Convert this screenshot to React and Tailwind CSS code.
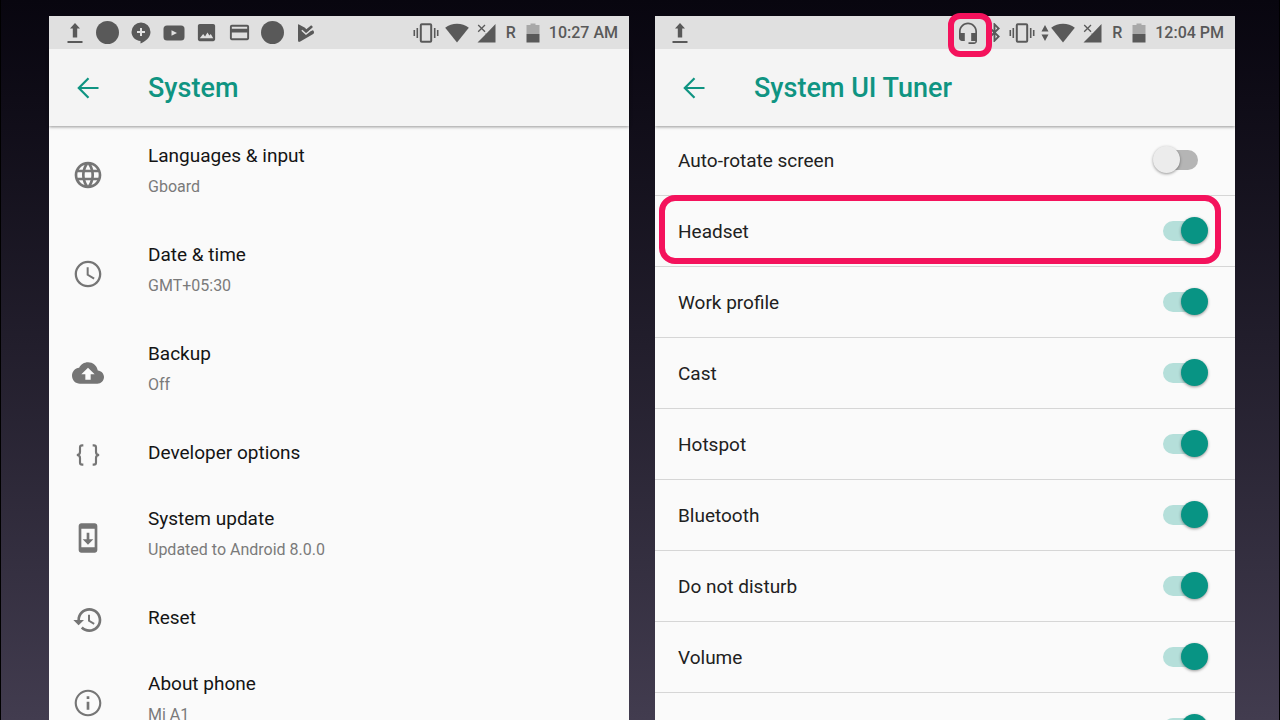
import { useState } from "react";

const systemItems = [
  { icon: "globe", title: "Languages & input", summary: "Gboard" },
  { icon: "clock", title: "Date & time", summary: "GMT+05:30" },
  { icon: "cloud", title: "Backup", summary: "Off" },
  { icon: "braces", title: "Developer options" },
  { icon: "update", title: "System update", summary: "Updated to Android 8.0.0" },
  { icon: "restore", title: "Reset" },
  { icon: "info", title: "About phone", summary: "Mi A1" },
];

const initialToggles = [
  { id: "rotate", label: "Auto-rotate screen", on: false },
  { id: "headset", label: "Headset", on: true, highlighted: true },
  { id: "work", label: "Work profile", on: true },
  { id: "cast", label: "Cast", on: true },
  { id: "hotspot", label: "Hotspot", on: true },
  { id: "bluetooth", label: "Bluetooth", on: true },
  { id: "dnd", label: "Do not disturb", on: true },
  { id: "volume", label: "Volume", on: true },
  { id: "wifi", label: "Wi-Fi", on: true },
];

// 24x24 material paths
const paths = {
  globe:
    "M11.99 2C6.47 2 2 6.48 2 12s4.47 10 9.99 10C17.52 22 22 17.52 22 12S17.52 2 11.99 2zm6.93 6h-2.95c-.32-1.25-.78-2.45-1.38-3.56 1.84.63 3.37 1.91 4.33 3.56zM12 4.04c.83 1.2 1.48 2.53 1.91 3.96h-3.82c.43-1.43 1.08-2.76 1.91-3.96zM4.26 14C4.1 13.36 4 12.69 4 12s.1-1.36.26-2h3.38c-.08.66-.14 1.32-.14 2s.06 1.34.14 2H4.26zm.82 2h2.95c.32 1.25.78 2.45 1.38 3.56-1.84-.63-3.37-1.9-4.33-3.56zm2.95-8H5.08c.96-1.66 2.49-2.93 4.33-3.56C8.81 5.55 8.35 6.75 8.03 8zM12 19.96c-.83-1.2-1.48-2.53-1.91-3.96h3.82c-.43 1.43-1.08 2.76-1.91 3.96zM14.34 14H9.66c-.09-.66-.16-1.32-.16-2s.07-1.35.16-2h4.68c.09.65.16 1.32.16 2s-.07 1.34-.16 2zm.25 5.56c.6-1.11 1.06-2.31 1.38-3.56h2.95c-.96 1.65-2.49 2.93-4.33 3.56zM16.36 14c.08-.66.14-1.32.14-2s-.06-1.34-.14-2h3.38c.16.64.26 1.31.26 2s-.1 1.36-.26 2h-3.38z",
  clock:
    "M11.99 2C6.47 2 2 6.48 2 12s4.47 10 9.99 10C17.52 22 22 17.52 22 12S17.52 2 11.99 2zM12 20.3c-4.58 0-8.3-3.72-8.3-8.3s3.72-8.3 8.3-8.3 8.3 3.72 8.3 8.3-3.72 8.3-8.3 8.3zM12.500 7H11v6l5.200 3.100.8-1.300-4.500-2.600z",
  cloud:
    "M19.35 10.04C18.67 6.59 15.64 4 12 4 9.11 4 6.6 5.64 5.35 8.04 2.34 8.36 0 10.91 0 14c0 3.31 2.69 6 6 6h13c2.76 0 5-2.24 5-5 0-2.64-2.05-4.78-4.65-4.96zM14 13v4h-4v-4H7l5-5 5 5h-3z",
  update:
    "M17 1.01L7 1c-1.1 0-2 .9-2 2v18c0 1.1.9 2 2 2h10c1.1 0 2-.9 2-2V3c0-1.1-.9-1.99-2-1.99zM17 19H7V5h10v14zm-1-6h-3V8h-2v5H8l4 4 4-4z",
  restore:
    "M13 3c-4.97 0-9 4.03-9 9H1l3.89 3.89.07.14L9 12H6c0-3.87 3.13-7 7-7s7 3.13 7 7-3.13 7-7 7c-1.93 0-3.68-.79-4.94-2.06l-1.42 1.42C8.27 19.99 10.51 21 13 21c4.97 0 9-4.03 9-9s-4.03-9-9-9zm-1 5v5l4.28 2.54.72-1.21-3.5-2.08V8H12z",
  info: "M11 7h2v2h-2zm0 4h2v6h-2zm1-9C6.48 2 2 6.48 2 12s4.48 10 10 10 10-4.48 10-10S17.52 2 12 2zm0 18.4c-4.6 0-8.4-3.8-8.4-8.4S7.4 3.6 12 3.6s8.4 3.8 8.4 8.4-3.8 8.4-8.4 8.4z",
  headset:
    "M12 1.500c-4.970 0-9 4.030-9 9v6.500c0 1.660 1.340 3 3 3h2.800v-8H4.700v-1.500c0-4 3.300-7.300 7.300-7.300s7.300 3.300 7.300 7.300V12h-4.100v8h4.100v1.200H12.500v1.700h5.500c1.660 0 3-1.340 3-3v-9.400c0-4.970-4.030-9-9-9z",
  bluetooth:
    "M17.71 7.71L12 2h-1v7.59L6.41 5 5 6.41 10.59 12 5 17.59 6.41 19 11 14.41V22h1l5.71-5.71-4.3-4.29 4.3-4.29zM13 5.83l1.88 1.88L13 9.59V5.83zm1.88 10.46L13 18.17v-3.76l1.88 1.88z",
  image:
    "M21 19V5c0-1.1-.9-2-2-2H5c-1.1 0-2 .9-2 2v14c0 1.1.9 2 2 2h14c1.1 0 2-.9 2-2zM5 18l3.500-4.500 2 2.600 2.500-4.100 2 3 1.500-1.500L19 18z",
  card: "M20 4H4c-1.11 0-1.99.89-1.99 2L2 18c0 1.11.89 2 2 2h16c1.11 0 2-.89 2-2V6c0-1.11-.89-2-2-2zm0 14H4v-6h16v6zm0-10H4V6h16v2z",
};

const PathIcon = ({ name, className }) => (
  <svg viewBox="0 0 24 24" fill="currentColor" className={className} aria-hidden="true">
    <path d={paths[name]} />
  </svg>
);

const BracesIcon = ({ className }) => (
  <svg
    viewBox="0 0 24 24"
    fill="none"
    stroke="currentColor"
    strokeWidth="1.6"
    className={className}
    aria-hidden="true"
  >
    <path d="M8.5 4.8H7.6Q6 4.8 6 6.4V9.8Q6 12 3.6 12Q6 12 6 14.2V17.6Q6 19.2 7.6 19.2H8.5" />
    <path d="M15.5 4.8H16.4Q18 4.8 18 6.4V9.8Q18 12 20.4 12Q18 12 18 14.2V17.6Q18 19.2 16.4 19.2H15.5" />
  </svg>
);

const UploadIcon = () => (
  <svg viewBox="0 0 16 22" fill="currentColor" className="h-[22px] w-4" aria-hidden="true">
    <path d="M8 1L13 6.5H10.2V15.5H5.8V6.5H3zM.5 19H15.5V21H.5z" />
  </svg>
);

const DotIcon = () => <span className="size-[23px] rounded-full bg-[#595959]" />;

const HangoutsIcon = () => (
  <svg viewBox="0 0 20 22" className="h-[22px] w-5" aria-hidden="true">
    <path
      fill="currentColor"
      d="M10 .5A9.5 9.5 0 0 0 .5 10c0 4.8 3.8 8.6 9 9v2.6c4.5-1.9 10-6 10-11.6A9.5 9.5 0 0 0 10 .5z"
    />
    <path stroke="#e0e0e0" strokeWidth="2" d="M10 6V14M6 10H14" />
  </svg>
);

const YoutubeIcon = () => (
  <svg viewBox="0 0 22 16" className="h-4 w-[22px]" aria-hidden="true">
    <rect x=".5" y=".5" width="21" height="15" rx="3.5" fill="currentColor" />
    <path d="M8.5 5.2L14 8L8.5 10.8z" fill="#e0e0e0" />
  </svg>
);

const PlayCheckIcon = () => (
  <svg viewBox="0 0 18 20" className="h-5 w-[18px]" aria-hidden="true">
    <path
      fill="currentColor"
      d="M1.5 1.2L8 4.8L9.3 6.2L14.2 2.2L16 4L11.500 8.6L16 7.2Q18 9.2 16.2 11L3.3 18.6Q1 19.6 1 17.6V2Q1 1 1.5 1.2z"
    />
    <path fill="none" stroke="#e0e0e0" strokeWidth="1.5" d="M4.8 7.2L9 11L16.5 5" />
  </svg>
);

const VibrateIcon = () => (
  <svg
    viewBox="0 0 26 20"
    fill="none"
    stroke="currentColor"
    strokeWidth="1.6"
    className="h-5 w-[26px]"
    aria-hidden="true"
  >
    <rect x="7.8" y="1.3" width="10.4" height="17.4" rx="1" strokeWidth="2" />
    <path d="M1.3 7V13M4.3 5V15M21.7 5V15M24.7 7V13" />
  </svg>
);

const WifiIcon = () => (
  <svg viewBox="0 0 24 20" fill="currentColor" className="h-5 w-6" aria-hidden="true">
    <path d="M12 19.5L.2 4.8C3.5 2 7.6 .7 12 .7S20.5 2 23.8 4.8z" />
  </svg>
);

const SignalIcon = () => (
  <svg viewBox="0 0 19 20" className="h-5 w-[19px]" aria-hidden="true">
    <path fill="currentColor" d="M18.5 1V19.5H.5L8.5 11.500V10.5H9.5z" />
    <path stroke="currentColor" strokeWidth="1.3" d="M1.2 2L8 8.8M8 2L1.2 8.8" />
  </svg>
);

const BatteryIcon = () => (
  <svg viewBox="0 0 14 20" className="h-5 w-3.5" aria-hidden="true">
    <path fill="#a8a8a8" d="M4.5 .5H9.500V2H13.5V11H.5V2H4.5z" />
    <path fill="currentColor" d="M.5 11H13.5V19.5H.5z" />
  </svg>
);

const DataArrowsIcon = () => (
  <svg viewBox="0 0 8 16" fill="currentColor" className="h-4 w-2" aria-hidden="true">
    <path d="M4 0L7.5 6.5H.5zM4 16L.5 9.5H7.5z" />
  </svg>
);

const SystemStatus = ({ time }) => (
  <>
    <WifiIcon />
    <span className="ml-2 flex">
      <SignalIcon />
    </span>
    <span className="ml-2.5 w-[10px] text-base font-medium">R</span>
    <span className="ml-2.5 flex">
      <BatteryIcon />
    </span>
    <span className="ml-[9px] text-base font-medium whitespace-nowrap">{time}</span>
  </>
);

const AppBar = ({ title }) => (
  <header className="relative z-10 flex h-[77px] items-center gap-[49px] bg-[#f4f4f4] pl-7 text-[#0f9482] shadow-[0_1px_3px_rgba(0,0,0,0.4)]">
    <button type="button" aria-label="Back" className="flex">
      <svg
        viewBox="0 0 22 22"
        fill="none"
        stroke="currentColor"
        strokeWidth="2.2"
        className="size-[22px]"
        aria-hidden="true"
      >
        <path d="M21.5 11H1.8M11.5 1.2L1.8 11L11.5 20.8" />
      </svg>
    </button>
    <h1 className="pt-0.5 text-[27px] font-medium">{title}</h1>
  </header>
);

const SystemRow = ({ item }) => (
  <li>
    <a href="#" className="flex items-center gap-11 py-3.5 pl-[23px]">
      <span className="pt-1.5 text-[#757575]">
        {item.icon === "braces" ? (
          <BracesIcon className="size-8" />
        ) : (
          <PathIcon name={item.icon} className="size-8" />
        )}
      </span>
      <span className="pt-1.5 pb-1">
        <span className="block text-[19px] leading-[28px] text-[#141414]">{item.title}</span>
        {item.summary && (
          <span className="block text-base leading-[33px] text-[#7a7a7a]">{item.summary}</span>
        )}
      </span>
    </a>
  </li>
);

const ToggleRow = ({ item, onToggle }) => (
  <li className="relative border-b border-[#d6d6d6]">
    <label className="flex h-[70px] items-center justify-between pr-[27px] pl-[23px] text-[19px] text-[#212121]">
      <span className="pt-0.5">{item.label}</span>
      <input
        type="checkbox"
        role="switch"
        checked={item.on}
        onChange={() => onToggle(item.id)}
        className="relative h-7 w-[55px] appearance-none before:absolute before:top-1 before:left-2.5 before:h-5 before:w-[35px] before:rounded-full before:bg-[#b5b5b5] after:absolute after:top-0 after:left-0 after:size-[27px] after:rounded-full after:bg-[#ececec] after:shadow-[0_1px_3px_rgba(0,0,0,0.4)] checked:before:bg-[#b5dfda] checked:after:left-7 checked:after:bg-[#089484]"
      />
    </label>
    {item.highlighted && (
      <span className="pointer-events-none absolute -top-px right-3.5 bottom-0.5 left-1 z-10 rounded-2xl border-[6px] border-[#f4125c]" />
    )}
  </li>
);

const App = () => {
  const [toggles, setToggles] = useState(initialToggles);

  const handleToggle = (id) => {
    setToggles((prev) => prev.map((t) => (t.id === id ? { ...t, on: !t.on } : t)));
  };

  return (
    <div className="grid h-screen grid-cols-2 gap-[26px] overflow-hidden border-x border-black bg-linear-to-b from-[#08060f] to-[#423c4f] pt-4 pr-11 pl-12 font-[Roboto,sans-serif]">
      {/* System settings */}
      <section className="bg-[#fafafa]">
        <div className="relative z-20 flex h-[33px] items-center justify-between bg-[#e0e0e0] pr-[11px] pl-[9px] text-[#595959]">
          <div className="grid grid-cols-[repeat(8,33px)] items-center justify-items-center">
            <UploadIcon />
            <DotIcon />
            <HangoutsIcon />
            <YoutubeIcon />
            <PathIcon name="image" className="size-[23px]" />
            <PathIcon name="card" className="size-[23px]" />
            <DotIcon />
            <PlayCheckIcon />
          </div>
          <div className="flex items-center">
            <span className="mr-1.5 flex">
              <VibrateIcon />
            </span>
            <SystemStatus time="10:27 AM" />
          </div>
        </div>
        <AppBar title="System" />
        <ul className="-mt-1">
          {systemItems.map((item) => (
            <SystemRow key={item.title} item={item} />
          ))}
        </ul>
      </section>

      {/* System UI Tuner */}
      <section className="bg-[#fafafa]">
        <div className="relative z-20 flex h-[33px] items-center justify-between bg-[#e0e0e0] pr-[11px] pl-[17px] text-[#595959]">
          <UploadIcon />
          <div className="flex items-center">
            <span className="relative z-10 flex">
              <PathIcon name="headset" className="size-6" />
              <span className="absolute -top-2 -right-3 -bottom-3 -left-2 rounded-xl border-[6px] border-[#f4125c]" />
            </span>
            <PathIcon name="bluetooth" className="mx-[3px] size-[23px]" />
            <VibrateIcon />
            <span className="mr-0.5 ml-1.5 flex">
              <DataArrowsIcon />
            </span>
            <SystemStatus time="12:04 PM" />
          </div>
        </div>
        <AppBar title="System UI Tuner" />
        <ul className="-mt-px">
          {toggles.map((item) => (
            <ToggleRow key={item.id} item={item} onToggle={handleToggle} />
          ))}
        </ul>
      </section>
    </div>
  );
};

export default App;
